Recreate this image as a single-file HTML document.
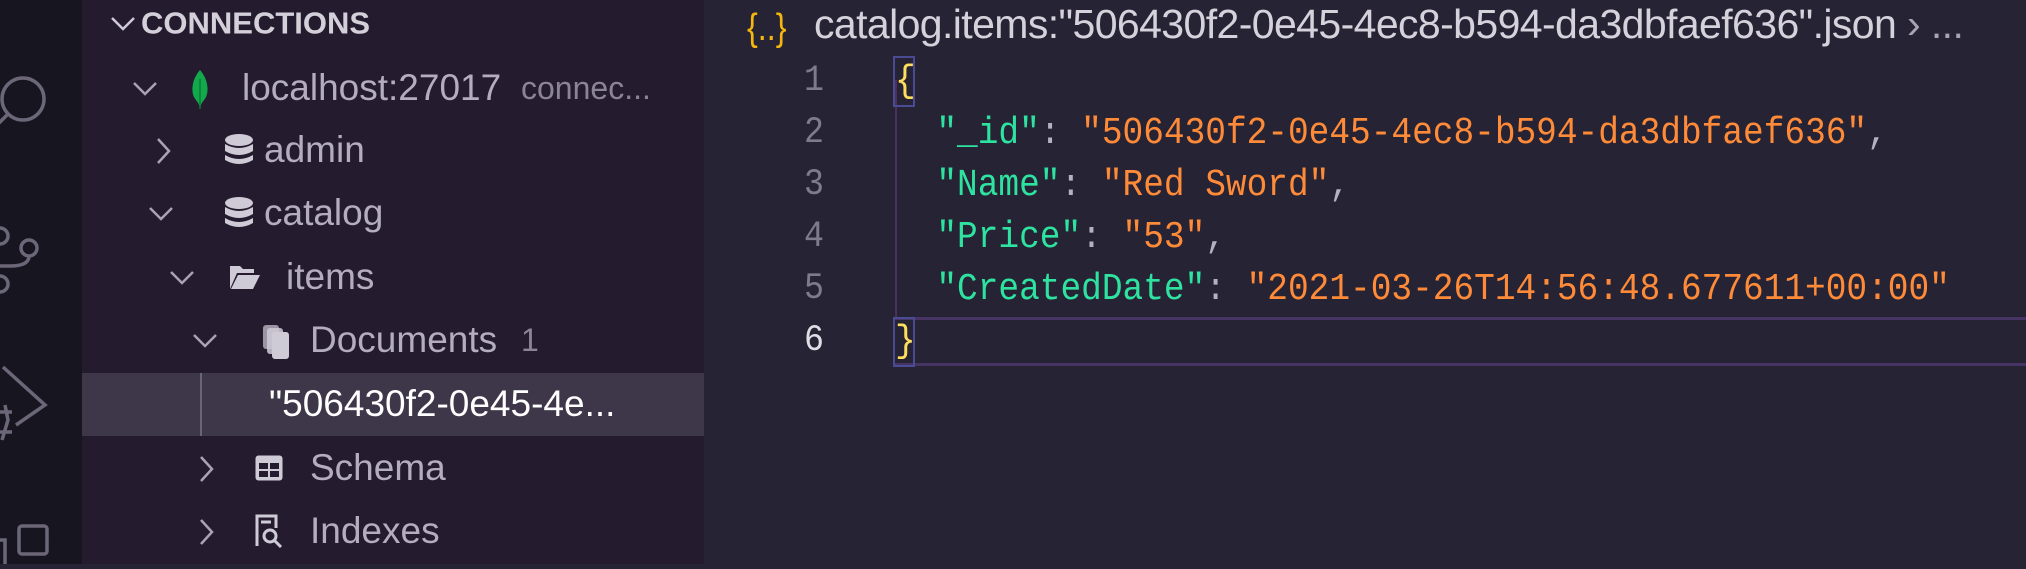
<!DOCTYPE html>
<html><head><meta charset="utf-8"><style>
*{margin:0;padding:0;box-sizing:border-box}
body{width:2026px;height:564px;overflow:hidden;background:#262335;position:relative;font-family:"Liberation Sans",sans-serif}
#act{position:absolute;left:0;top:0;width:82px;height:564px;background:#171520}
#side{position:absolute;left:82px;top:0;width:622px;height:564px;background:#241b2f;overflow:hidden}
.row{position:absolute;left:0;width:622px;height:63px;font-size:37px;color:#b4adbd;white-space:nowrap}
.row span.t{position:absolute;top:50%;transform:translateY(-52%)}
.chev{position:absolute;top:50%;transform:translateY(-50%)}
#ed{position:absolute;left:704px;top:0;right:0;height:564px}
.ln{position:absolute;width:120px;text-align:right;left:0;font-family:"Liberation Mono",monospace;font-size:37px;color:#7f7a8c;transform:scaleX(0.9);transform-origin:right}
.code{position:absolute;left:191px;font-family:"Liberation Mono",monospace;font-size:38px;letter-spacing:0;white-space:pre;color:#b6b1c0;transform:scaleX(0.907);transform-origin:left}
.k{color:#2ee2a0}.s{color:#ff8b39}.b{color:#fede5d}
</style></head><body>
<div id="act">
<svg width="82" height="564" fill="none" stroke="#6c6778" stroke-width="3.5">
<circle cx="23" cy="99" r="21"/><line x1="8" y1="114" x2="-4" y2="126"/>
<circle cx="29" cy="248" r="8"/><circle cx="0" cy="236" r="8"/><circle cx="0" cy="284" r="8"/><path d="M29 256 Q29 266 10 266 L0 266"/>
<path d="M3 367 L45 405 L16 425"/><path d="M-2 412 L12 412 M-2 432 L12 432 M5 405 L8 420 L2 440"/>
<rect x="19" y="526" width="28" height="28" rx="3"/><path d="M0 540 L5 540 L5 564"/>
</svg>
</div>
<div id="side">
<div class="row" style="top:-8px;font-size:31px;font-weight:bold;color:#d4d0da">
<svg class="chev" style="left:28px" width="26" height="16"><path d="M2 2 L13 13 L24 2" fill="none" stroke="#cfcad6" stroke-width="2.5"/></svg>
<span class="t" style="left:59px">CONNECTIONS</span></div>

<div class="row" style="top:57px">
<svg class="chev" style="left:50px" width="26" height="16"><path d="M2 2 L13 13 L24 2" fill="none" stroke="#a9a3b3" stroke-width="2.5"/></svg>
<svg style="position:absolute;left:108px;top:12px" width="20" height="42"><path d="M10 1 C2 10 1 22 4 28 C6 32 9 33 10 40 C11 33 14 32 16 28 C19 22 18 10 10 1Z" fill="#12a94c"/><line x1="10" y1="10" x2="10" y2="40" stroke="#0b7a34" stroke-width="1.5"/></svg>
<span class="t" style="left:160px">localhost:27017</span>
<span class="t" style="left:439px;font-size:32px;color:#8b8494">connec...</span></div>

<div class="row" style="top:119px">
<svg class="chev" style="left:74px" width="16" height="28"><path d="M2 2 L13 14 L2 26" fill="none" stroke="#a9a3b3" stroke-width="2.5"/></svg>
<svg style="position:absolute;left:142px;top:15px" width="30" height="32" fill="#cfcbd6"><ellipse cx="15" cy="6" rx="14" ry="6"/><path d="M1 10 Q15 18 29 10 V17 Q15 25 1 17Z"/><path d="M1 21 Q15 29 29 21 V26 Q15 34 1 26Z"/></svg>
<span class="t" style="left:182px">admin</span></div>

<div class="row" style="top:182px">
<svg class="chev" style="left:66px" width="26" height="16"><path d="M2 2 L13 13 L24 2" fill="none" stroke="#a9a3b3" stroke-width="2.5"/></svg>
<svg style="position:absolute;left:142px;top:15px" width="30" height="32" fill="#cfcbd6"><ellipse cx="15" cy="6" rx="14" ry="6"/><path d="M1 10 Q15 18 29 10 V17 Q15 25 1 17Z"/><path d="M1 21 Q15 29 29 21 V26 Q15 34 1 26Z"/></svg>
<span class="t" style="left:182px">catalog</span></div>

<div class="row" style="top:246px">
<svg class="chev" style="left:87px" width="26" height="16"><path d="M2 2 L13 13 L24 2" fill="none" stroke="#a9a3b3" stroke-width="2.5"/></svg>
<svg style="position:absolute;left:147px;top:18px" width="32" height="26" fill="#cfcbd6"><path d="M1 2 H11 L14 5 H25 V9 H8 L1 25Z"/><path d="M9 11 H31 L24 25 H2Z"/></svg>
<span class="t" style="left:204px">items</span></div>

<div class="row" style="top:309px">
<svg class="chev" style="left:110px" width="26" height="16"><path d="M2 2 L13 13 L24 2" fill="none" stroke="#a9a3b3" stroke-width="2.5"/></svg>
<svg style="position:absolute;left:180px;top:15px" width="28" height="36" fill="#cfcbd6"><rect x="1" y="1" width="16" height="24" rx="3" opacity=".7"/><rect x="5" y="4" width="16" height="26" rx="3" opacity=".85"/><rect x="10" y="8" width="17" height="27" rx="3"/></svg>
<span class="t" style="left:228px">Documents</span>
<span class="t" style="left:439px;font-size:32px;color:#8b8494">1</span></div>

<div class="row" style="top:373px;background:#3e3649">
<div style="position:absolute;left:118px;top:0;width:2px;height:63px;background:#6a6574"></div>
<span class="t" style="left:187px;color:#ffffff">"506430f2-0e45-4e...</span></div>

<div class="row" style="top:437px">
<svg class="chev" style="left:117px" width="16" height="28"><path d="M2 2 L13 14 L2 26" fill="none" stroke="#a9a3b3" stroke-width="2.5"/></svg>
<svg style="position:absolute;left:172px;top:17px" width="30" height="28"><rect x="1.5" y="1.5" width="27" height="25" rx="3" fill="#cfcbd6"/><rect x="5" y="9" width="9" height="6" fill="#241b2f"/><rect x="16" y="9" width="9" height="6" fill="#241b2f"/><rect x="5" y="17" width="9" height="6" fill="#241b2f"/><rect x="16" y="17" width="9" height="6" fill="#241b2f"/></svg>
<span class="t" style="left:228px">Schema</span></div>

<div class="row" style="top:500px">
<svg class="chev" style="left:117px" width="16" height="28"><path d="M2 2 L13 14 L2 26" fill="none" stroke="#a9a3b3" stroke-width="2.5"/></svg>
<svg style="position:absolute;left:173px;top:14px" width="30" height="34" fill="none" stroke="#cfcbd6" stroke-width="3"><path d="M2 32 V2 H21 V14"/><path d="M6 8 H16"/><circle cx="15" cy="22" r="6"/><path d="M19 26 L26 33"/></svg>
<span class="t" style="left:228px">Indexes</span></div>
</div>

<div id="ed">
<svg style="position:absolute;left:43px;top:4px" width="60" height="48"><text x="0" y="36" font-family="Liberation Sans" font-size="38" fill="#f5b70e" transform="scale(0.85,1)">{..}</text></svg>
<div style="position:absolute;left:110px;top:1px;font-size:41px;color:#d6d2dc;white-space:nowrap;letter-spacing:-0.6px">catalog.items:"506430f2-0e45-4ec8-b594-da3dbfaef636".json <span style="color:#a9a3b3">&#x203A; ...</span></div>

<div style="position:absolute;left:191px;top:317px;right:0;height:49px;border-top:3px solid #463465;border-bottom:3px solid #463465"></div>
<div style="position:absolute;left:191px;top:80px;width:2px;height:237px;background:#4e2e5c"></div>
<div style="position:absolute;left:189px;top:56px;width:22px;height:51px;border:2px solid #4b4a94"></div>
<div style="position:absolute;left:189px;top:317px;width:22px;height:50px;border:2px solid #4b4a94"></div>

<div class="ln" style="top:60px">1</div>
<div class="ln" style="top:112px">2</div>
<div class="ln" style="top:164px">3</div>
<div class="ln" style="top:216px">4</div>
<div class="ln" style="top:268px">5</div>
<div class="ln" style="top:320px;color:#e0dde6">6</div>

<div class="code" style="top:60px"><span class="b">{</span></div>
<div class="code" style="top:112px">  <span class="k">"_id"</span>: <span class="s">"506430f2-0e45-4ec8-b594-da3dbfaef636"</span>,</div>
<div class="code" style="top:164px">  <span class="k">"Name"</span>: <span class="s">"Red Sword"</span>,</div>
<div class="code" style="top:216px">  <span class="k">"Price"</span>: <span class="s">"53"</span>,</div>
<div class="code" style="top:268px">  <span class="k">"CreatedDate"</span>: <span class="s">"2021-03-26T14:56:48.677611+00:00"</span></div>
<div class="code" style="top:320px"><span class="b">}</span></div>
</div>
</body></html>
